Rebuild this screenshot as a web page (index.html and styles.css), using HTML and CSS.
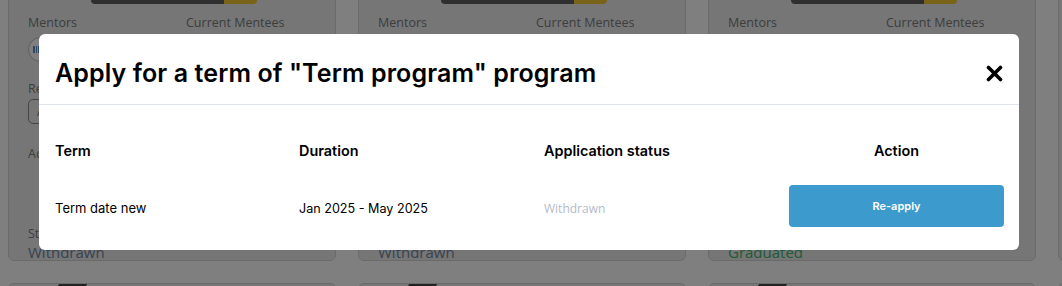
FILE: index.html
```html
<!DOCTYPE html>
<html>
<head>
<meta charset="utf-8">
<link rel="stylesheet" href="styles.css">
</head>
<body>
<div class="cards">
  <div class="card">
    <div class="banner"></div>
    <div class="pair"><span>Mentors</span><span>Current Mentees</span></div>
    <div class="avatar"><span></span><span></span><span></span><span></span></div>
    <div class="lbl lbl-re">Resources</div>
    <div class="outline">Add</div>
    <div class="lbl lbl-ac">Actions</div>
    <div class="lbl lbl-st">Status</div>
    <div class="status st-w">Withdrawn</div>
  </div>
  <div class="card">
    <div class="banner"></div>
    <div class="pair"><span>Mentors</span><span>Current Mentees</span></div>
    <div class="avatar"><span></span><span></span><span></span><span></span></div>
    <div class="lbl lbl-re">Resources</div>
    <div class="outline">Add</div>
    <div class="lbl lbl-ac">Actions</div>
    <div class="lbl lbl-st">Status</div>
    <div class="status st-w">Withdrawn</div>
  </div>
  <div class="card">
    <div class="banner"></div>
    <div class="pair"><span>Mentors</span><span>Current Mentees</span></div>
    <div class="avatar"><span></span><span></span><span></span><span></span></div>
    <div class="lbl lbl-re">Resources</div>
    <div class="outline">Add</div>
    <div class="lbl lbl-ac">Actions</div>
    <div class="lbl lbl-st">Status</div>
    <div class="status st-g">Graduated</div>
  </div>
  <div class="card card-edge"></div>
  <div class="card card2"><div class="ribbon"></div></div>
  <div class="card card2"><div class="ribbon"></div></div>
  <div class="card card2"><div class="ribbon"></div></div>
  <div class="card card2 card-edge"></div>
</div>

<div class="overlay"></div>

<div class="modal">
  <div class="modal-head">
    <h2 class="modal-title">Apply for a term of "Term program" program</h2>
    <svg class="close" width="17" height="17" viewBox="0 0 17 17"><path d="M2.5 2.5 L14.5 14.5 M14.5 2.5 L2.5 14.5" stroke="#000" stroke-width="3.6" stroke-linecap="round"/></svg>
  </div>
  <div class="modal-body">
    <div class="grid">
      <div class="th">Term</div>
      <div class="th">Duration</div>
      <div class="th">Application status</div>
      <div class="th th-action">Action</div>
      <div class="td">Term date new</div>
      <div class="td td-dur">Jan 2025 - May 2025</div>
      <div class="td td-status">Withdrawn</div>
      <div class="td td-btn"><button class="btn">Re-apply</button></div>
    </div>
  </div>
</div>
</body>
</html>
```

FILE: styles.css
```css
* { box-sizing: border-box; }
html, body { margin: 0; padding: 0; }
body {
  width: 1062px;
  height: 286px;
  overflow: hidden;
  background: #ffffff;
  font-family: "Open Sans", "Noto Sans", sans-serif;
  position: relative;
}
.cards {
  display: grid;
  grid-template-columns: 328px 328px 328px 328px;
  grid-auto-rows: 281px;
  column-gap: 22px;
  row-gap: 22px;
  padding-left: 8px;
  margin-top: -20px;
}
.card {
  background: #ededed;
  border: 1px solid #d4d4d4;
  border-radius: 6px;
  padding: 0 19px;
  position: relative;
  overflow: hidden;
}
.banner {
  width: 166px;
  height: 23px;
  margin-left: 63px;
  border-radius: 0 0 4px 4px;
  background: linear-gradient(90deg, #5e5e5e 0, #5e5e5e 80%, #f2c630 80%, #f2c630 100%);
}
.pair {
  display: grid;
  grid-template-columns: 158px 1fr;
  font-size: 12.5px;
  line-height: 18px;
  color: #7a7a7a;
  margin-top: 10px;
}
.avatar {
  width: 25px;
  height: 25px;
  border-radius: 50%;
  border: 1px solid #bdbdbd;
  background: #fff;
  margin-top: 5px;
  display: flex;
  align-items: center;
  padding-left: 4px;
  gap: 1px;
}
.avatar span {
  width: 1.5px;
  height: 7px;
  background: #5b8fc9;
}
.lbl {
  font-size: 12.5px;
  line-height: 18px;
  color: #7a7a7a;
}
.lbl-re { margin-top: 18px; }
.outline {
  width: 110px;
  height: 25px;
  margin-top: 1px;
  border: 1px solid #8b8b8b;
  border-radius: 5px;
  font-size: 12px;
  line-height: 23px;
  padding-left: 8px;
  color: #777;
}
.lbl-ac { margin-top: 21px; }
.lbl-st { margin-top: 62px; }
.status {
  font-size: 15px;
  line-height: 18px;
}
.st-w { color: #71849f; }
.st-g { color: #3bb574; }
.ribbon {
  width: 28px;
  height: 4px;
  margin-left: 30px;
  background: #444;
  transform: skewX(-30deg);
}
.overlay {
  position: absolute;
  inset: 0;
  background: rgba(0, 0, 0, 0.5);
}
.modal {
  position: absolute;
  left: 39px;
  top: 34px;
  width: 980px;
  height: 216px;
  background: #fff;
  border-radius: 6px;
  font-family: "Inter", "Noto Sans", sans-serif;
  color: #000;
}
.modal-head {
  height: 71px;
  border-bottom: 1px solid #dfe4ec;
  display: flex;
  align-items: center;
  justify-content: space-between;
  padding: 8px 16px 0 16px;
}
.modal-title {
  margin: 0;
  font-size: 25px;
  font-weight: 600;
  letter-spacing: 0.1px;
}
.close { display: block; }
.modal-body {
  padding: 28px 15px 0 16px;
}
.grid {
  display: grid;
  grid-template-columns: 244px 245px 245px 215px;
  grid-template-rows: 34px 58px;
  row-gap: 10px;
  align-items: center;
}
.th {
  font-size: 14.4px;
  font-weight: 600;
}
.th-action { text-align: center; }
.td {
  font-size: 13px;
  padding-top: 4px;
}
.td-btn { padding-top: 0; }
.td-dur { font-size: 12.6px; }
.td-status {
  font-family: "Open Sans", "Noto Sans", sans-serif;
  font-size: 12px;
  color: #b3bbc9;
}
.btn {
  display: block;
  width: 215px;
  height: 42px;
  border: none;
  border-radius: 4px;
  background: #3c9bcc;
  color: #fff;
  font-family: "Inter", "Noto Sans", sans-serif;
  font-weight: 600;
  font-size: 11px;
}
```
